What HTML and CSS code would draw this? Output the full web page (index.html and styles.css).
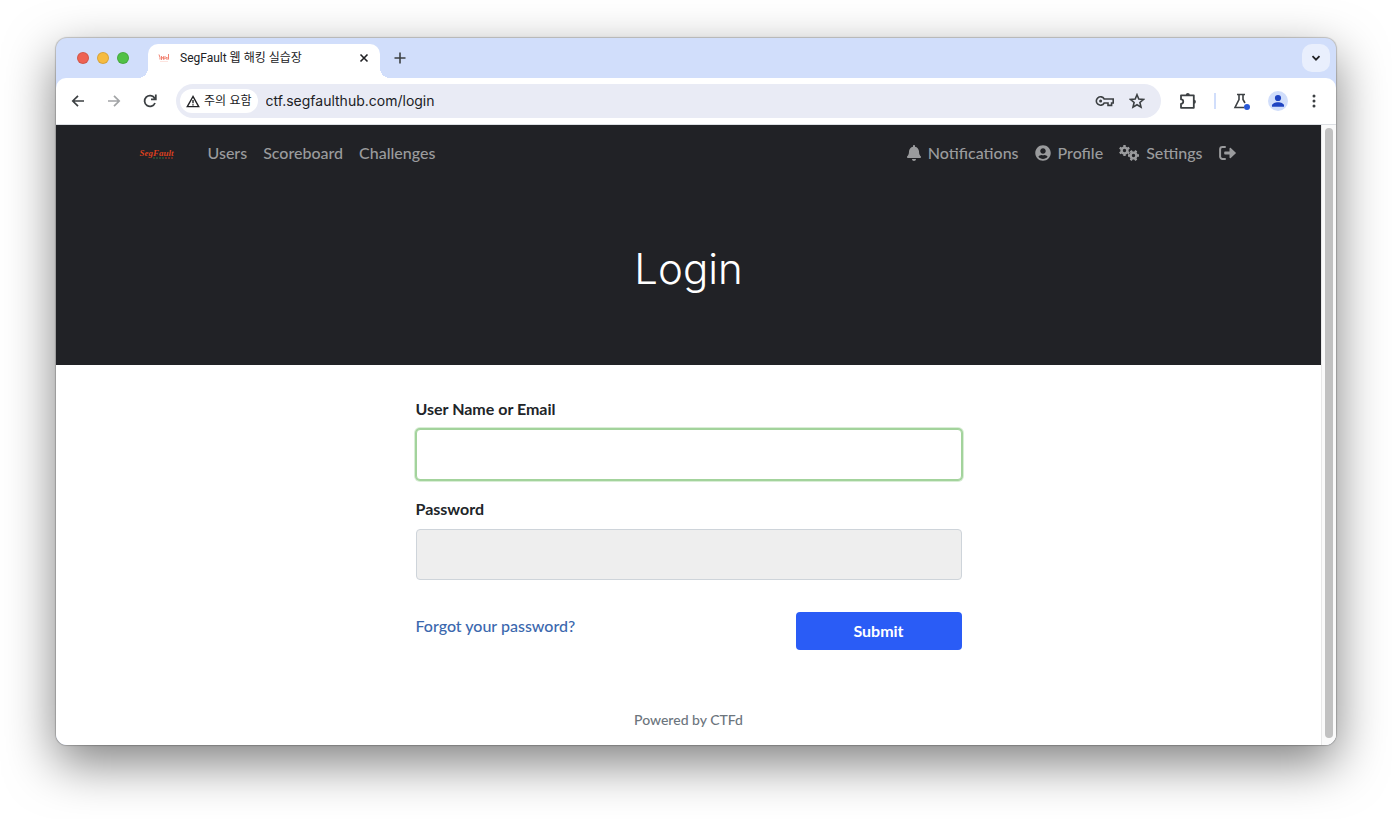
FILE: index.html
```html
<!DOCTYPE html>
<html lang="ko">

<head>
    <meta charset="UTF-8">
    <meta name="viewport" content="width=device-width, initial-scale=1.0">
    <title>SegFault 웹 해킹 실습장</title>
    <link rel="stylesheet" href="styles.css">
</head>

<body>
    <div class="window">
        <div class="tabs">
            <div class="lights">
                <span class="light red"></span>
                <span class="light yellow"></span>
                <span class="light green"></span>
            </div>
            <div class="tab">
                <svg class="favicon" width="12" height="10" viewBox="0 0 12 10" fill="none" stroke="#f28373" stroke-width="1">
                    <path d="M1 1.500l1 3v2M3.500 3v4M3.500 6l2-2.500v3l1.500-1V3M7.500 6l1.500-2v3M10.500 1v5.500" />
                    <path d="M2 8.500h8" stroke="#fde4df" />
                </svg>
                <span class="tab-title">SegFault 웹 해킹 실습장</span>
                <button class="icon-btn tab-close" aria-label="Close tab">
                    <svg width="10" height="10" viewBox="0 0 10 10" stroke="#202124" stroke-width="1.6"><path d="M1.500 1.500l7 7M8.500 1.500l-7 7" /></svg>
                </button>
            </div>
            <button class="icon-btn new-tab" aria-label="New tab">
                <svg width="12" height="12" viewBox="0 0 12 12" stroke="#3c4043" stroke-width="1.6"><path d="M6 0.500v11M0.500 6h11" /></svg>
            </button>
            <button class="icon-btn tab-search" aria-label="Search tabs">
                <svg width="10" height="8" viewBox="0 0 10 8" fill="none" stroke="#202124" stroke-width="1.8"><path d="M1.500 2.200L5 5.700l3.500-3.500" /></svg>
            </button>
        </div>

        <div class="toolbar">
            <div class="history">
                <button class="icon-btn" aria-label="Back">
                    <svg width="14" height="14" viewBox="0 0 14 14" fill="none" stroke="#3c4043" stroke-width="1.7"><path d="M13 7H2M7 1.800L1.800 7 7 12.200" /></svg>
                </button>
                <button class="icon-btn" aria-label="Forward">
                    <svg width="14" height="14" viewBox="0 0 14 14" fill="none" stroke="#a2a4a6" stroke-width="1.7"><path d="M1 7h11M7 1.800L12.200 7 7 12.200" /></svg>
                </button>
                <button class="icon-btn" aria-label="Reload">
                    <svg width="14" height="14" viewBox="0 0 14 14" fill="none" stroke="#3c4043" stroke-width="1.8"><path d="M12 9A5.400 5.400 0 1 1 11.500 4L12.500 5M12.800 0.500V5.300H8" /></svg>
                </button>
            </div>
            <div class="omnibox">
                <button class="site-info">
                    <svg width="14" height="13" viewBox="0 0 14 13" fill="none" stroke="#202124" stroke-width="1.4"><path d="M7 1.500L1.300 11.600h11.400zM7 5v3.300M7 9.200v1.400" /></svg>
                    주의 요함
                </button>
                <input class="url" type="text" aria-label="Address" value="ctf.segfaulthub.com/login">
                <button class="icon-btn" aria-label="Passwords">
                    <svg width="20" height="14" viewBox="0 0 20 14" fill="none" stroke="#3c4043" stroke-width="1.6"><path d="M9.200 5A4.200 4.200 0 1 0 9.200 9H13v2.400h3.600V9h1.600V5z" /><circle cx="5.600" cy="7" r="1.500" fill="#3c4043" stroke="none" /></svg>
                </button>
                <button class="icon-btn" aria-label="Bookmark">
                    <svg width="16" height="16" viewBox="0 0 16 16" fill="none" stroke="#3c4043" stroke-width="1.6"><path d="M8 1.700l1.800 4.300 4.700.4-3.600 3.100 1.100 4.600L8 11.700l-4 2.400 1.100-4.600L1.500 6.400l4.700-.4z" /></svg>
                </button>
            </div>
            <div class="actions">
                <button class="icon-btn" aria-label="Extensions">
                    <svg width="18" height="18" viewBox="0 0 18 18" fill="none" stroke="#3c4043" stroke-width="1.8" stroke-linejoin="round"><path d="M2 3.300h12.800v12.500H2v-4a2.200 2.200 0 0 0 0-4.500z" /><path d="M6.800 3a2 1.900 0 0 1 4 0zM15 7.700a1.900 2 0 0 1 0 4z" fill="#3c4043" stroke="none" /></svg>
                </button>
                <span class="divider"></span>
                <button class="icon-btn" aria-label="Labs">
                    <svg width="18" height="18" viewBox="0 0 18 18" fill="none" stroke="#3c4043" stroke-width="1.6"><path d="M4 2.500h8M6 2.500v5L2 15.500h9M10 2.500v5l2 3.500" /><circle cx="14" cy="15" r="3" fill="#2858d6" stroke="none" /></svg>
                </button>
                <button class="icon-btn" aria-label="Account">
                    <svg width="20" height="20" viewBox="0 0 20 20" fill="#1f44c2"><circle cx="10" cy="10" r="10" fill="#d1defb" /><circle cx="10" cy="7" r="3.100" /><path d="M4 15.800v-1.300c0-2 3-3.300 6-3.300s6 1.300 6 3.300v1.300z" /></svg>
                </button>
                <button class="icon-btn menu" aria-label="Menu">
                    <svg width="4" height="14" viewBox="0 0 4 14" fill="#3c4043"><circle cx="2" cy="2" r="1.500" /><circle cx="2" cy="7" r="1.500" /><circle cx="2" cy="12" r="1.500" /></svg>
                </button>
            </div>
        </div>

        <div class="viewport">
            <div class="page">
                <header class="header">
                    <nav class="navbar">
                        <a class="brand" href="#">
                            <span class="brand-name">SegFault</span>
                            <svg class="brand-line" width="20" height="2" viewBox="0 0 20 2" stroke-width="2"><path d="M0 1h11" stroke="#2c4632" stroke-dasharray="2 1" /><path d="M12 1h8" stroke="#6b2c25" stroke-dasharray="2 1" /></svg>
                        </a>
                        <a class="nav-link" href="#">Users</a>
                        <a class="nav-link" href="#">Scoreboard</a>
                        <a class="nav-link" href="#">Challenges</a>
                        <div class="nav-right">
                            <a class="nav-link" href="#">
                                <svg width="14" height="16" viewBox="0 0 448 512" fill="currentColor"><path d="M224 512c35.32 0 63.97-28.65 63.97-64H160.03c0 35.35 28.65 64 63.97 64zm215.39-149.71c-19.32-20.76-55.47-51.99-55.47-154.29 0-77.7-54.48-139.9-127.94-155.16V32c0-17.67-14.32-32-31.98-32s-31.98 14.33-31.98 32v20.84C118.56 68.1 64.08 130.3 64.08 208c0 102.3-36.15 133.53-55.47 154.29-6 6.45-8.66 14.16-8.61 21.71.11 16.4 12.98 32 32.1 32h383.8c19.12 0 32-15.6 32.1-32 .05-7.55-2.61-15.27-8.61-21.71z" /></svg>
                                Notifications
                            </a>
                            <a class="nav-link" href="#">
                                <svg width="16" height="16" viewBox="0 0 496 512" fill="currentColor"><path d="M248 8C111 8 0 119 0 256s111 248 248 248 248-111 248-248S385 8 248 8zm0 96c48.600 0 88 39.400 88 88s-39.400 88-88 88-88-39.400-88-88 39.400-88 88-88zm0 344c-58.700 0-111.300-26.600-146.500-68.200 18.800-35.400 55.600-59.800 98.500-59.800 2.400 0 4.800.4 7.100 1.100 13 4.200 26.600 6.900 40.900 6.900 14.300 0 28-2.700 40.900-6.900 2.300-.7 4.700-1.100 7.100-1.100 42.900 0 79.700 24.400 98.500 59.800C359.300 421.400 306.700 448 248 448z" /></svg>
                                Profile
                            </a>
                            <a class="nav-link" href="#">
                                <svg width="20" height="16" viewBox="0 0 20 16" fill="none" stroke="currentColor" stroke-width="2.4">
                                    <circle cx="5.500" cy="5.500" r="2.900" />
                                    <path d="M5.500 0v2.500M5.500 8.500V11M.7 2.800L3 4.100M8 6.900l2.300 1.300M.7 8.200L3 6.900M8 4.100l2.300-1.300" />
                                    <circle cx="14.500" cy="10.500" r="2.900" />
                                    <path d="M9 10.500h2.500M17.500 10.500H20M11.800 5.700L13.100 8M15.900 13l1.300 2.300M17.200 5.700L15.900 8M13.100 13l-1.300 2.300" />
                                </svg>
                                Settings
                            </a>
                            <a class="nav-link" href="#" aria-label="Logout">
                                <svg width="17" height="14" viewBox="0 0 17 14" fill="currentColor"><path d="M6 1.100H3.500A2.400 2.400 0 0 0 1.100 3.500v7a2.400 2.400 0 0 0 2.400 2.400H6" fill="none" stroke="currentColor" stroke-width="2" stroke-linecap="round" /><path d="M6 5.500h4.500V2.600c0-.8.800-1.100 1.300-.6l4.800 4.400a.8.800 0 0 1 0 1.200L11.800 12c-.5.500-1.300.2-1.300-.6V8.500H6a.8.800 0 0 1-.8-.8V6.300a.8.800 0 0 1 .8-.8z" /></svg>
                            </a>
                        </div>
                    </nav>
                    <h1 class="title">Login</h1>
                </header>

                <form class="login">
                    <label class="label" for="name">User Name or Email</label>
                    <input class="field focused" id="name" type="text">
                    <label class="label" for="password">Password</label>
                    <input class="field" id="password" type="password">
                    <div class="form-row">
                        <a class="forgot" href="#">Forgot your password?</a>
                        <button class="submit" type="submit">Submit</button>
                    </div>
                </form>

                <footer class="footer"><a href="#">Powered by CTFd</a></footer>
            </div>
            <div class="scrollbar"><div class="thumb"></div></div>
        </div>
    </div>
</body>

</html>
```
FILE: styles.css
```css
* {
    box-sizing: border-box;
}

body {
    margin: 0;
    min-height: 100vh;
    padding: 38px 56px 74px;
    display: flex;
    background: #fff;
    font-family: Lato, "Noto Sans CJK KR", sans-serif;
    font-size: 16px;
    line-height: 24px;
    color: #212529;
}

button,
input {
    font: inherit;
    color: inherit;
    border: 0;
    padding: 0;
    background: none;
}

a {
    text-decoration: none;
}

svg {
    display: block;
    flex: none;
}

.window {
    flex: 1;
    display: flex;
    flex-direction: column;
    border-radius: 11px;
    overflow: hidden;
    background: #d1defb;
    box-shadow: 0 0 1px 1px rgba(0, 0, 0, 0.2), 0 18px 50px rgba(0, 0, 0, 0.5);
}

.icon-btn {
    display: flex;
    align-items: center;
    justify-content: center;
    flex: none;
}

/* tab strip */
.tabs {
    display: flex;
    align-items: center;
    height: 40px;
    padding-right: 6px;
    font-family: Roboto, "Noto Sans CJK KR", sans-serif;
}

.lights {
    display: flex;
    gap: 8px;
    padding: 0 19px 0 21px;
}

.light {
    width: 12px;
    height: 12px;
    border-radius: 50%;
    border: 1px solid rgba(0, 0, 0, 0.12);
}

.red {
    background: #ee6253;
}

.yellow {
    background: #f6bb40;
}

.green {
    background: #50c146;
}

.tab {
    position: relative;
    align-self: flex-end;
    display: flex;
    align-items: center;
    width: 232px;
    height: 34px;
    padding: 0 11px 6px 10px;
    border-radius: 10px 10px 0 0;
    background: #fff;
}

.tab::before,
.tab::after {
    content: "";
    position: absolute;
    bottom: 0;
    width: 10px;
    height: 10px;
}

.tab::before {
    right: 100%;
    background: radial-gradient(circle at 0 0, transparent 10px, #fff 10px);
}

.tab::after {
    left: 100%;
    background: radial-gradient(circle at 100% 0, transparent 10px, #fff 10px);
}

.tab-title {
    flex: 1;
    margin-left: 10px;
    font-size: 12px;
    line-height: 16px;
    color: #202124;
}

.new-tab {
    margin-left: 14px;
}

.tab-search {
    width: 28px;
    height: 28px;
    margin-left: auto;
    border-radius: 10px;
    background: #e9effd;
}

/* toolbar */
.toolbar {
    display: flex;
    align-items: center;
    height: 47px;
    padding: 0 20px 0 15px;
    border-radius: 10px 10px 0 0;
    border-bottom: 1px solid #dcdfe3;
    background: #fff;
    font-family: Inter, "Noto Sans CJK KR", sans-serif;
}

.history {
    display: flex;
    gap: 22px;
    margin-right: 19px;
}

.omnibox {
    flex: 1;
    display: flex;
    align-items: center;
    gap: 14px;
    height: 34px;
    padding: 0 16px 0 4px;
    border-radius: 17px;
    background: #e9ebf5;
}

.site-info {
    display: flex;
    align-items: center;
    gap: 4px;
    height: 24px;
    padding: 0 6px;
    border-radius: 12px;
    background: #fff;
    font-size: 12px;
    color: #202124;
}

.url {
    flex: 1;
    min-width: 0;
    margin-left: -6px;
    font-size: 14px;
    color: #202124;
}

.actions {
    display: flex;
    align-items: center;
    gap: 17px;
    margin-left: 18px;
}

.divider {
    width: 2px;
    height: 16px;
    background: #d1defb;
}

.menu {
    margin-left: 7px;
}

/* page */
.viewport {
    flex: 1;
    display: flex;
    background: #fff;
}

.page {
    flex: 1;
    display: flex;
    flex-direction: column;
}

.header {
    height: 240px;
    background: #212226;
}

.navbar {
    display: flex;
    align-items: center;
    max-width: 1110px;
    height: 56px;
    margin: 0 auto;
}

.brand {
    width: 66px;
    padding: 2px 0 0 6px;
    color: #d8401f;
}

.brand-name {
    display: block;
    font-family: "Liberation Serif", serif;
    font-size: 9px;
    font-style: italic;
    font-weight: bold;
    line-height: 8px;
}

.brand-line {
    margin-left: 13px;
}

.nav-link {
    display: flex;
    align-items: center;
    gap: 7px;
    padding: 8px;
    font-weight: 500;
    color: #9a9b9d;
}

.nav-right {
    display: flex;
    margin-left: auto;
}

.title {
    margin: 64px 0 0;
    font-family: Inter, sans-serif;
    font-size: 42px;
    font-weight: 300;
    line-height: 48px;
    text-align: center;
    color: #fff;
}

.login {
    width: 100%;
    max-width: 546px;
    margin: 0 auto;
    padding-top: 32px;
}

.label {
    display: block;
    margin-bottom: 8px;
    font-weight: bold;
}

.field {
    display: block;
    width: 100%;
    height: 51px;
    margin-bottom: 17px;
    padding: 0 12px;
    border: 1px solid #ced4da;
    border-radius: 4px;
    background: #eee;
}

.focused {
    border-color: #a3d39c;
    background: #fff;
    box-shadow: 0 0 0 1px #a3d39c, 0 0 0 2px #d9eed6;
    outline: none;
}

.form-row {
    display: flex;
    align-items: flex-start;
    justify-content: space-between;
    padding-top: 15px;
}

.forgot {
    line-height: 28px;
    font-weight: 500;
    color: #3b68ae;
}

.submit {
    width: 166px;
    height: 38px;
    border-radius: 4px;
    background: #2a5cf6;
    font-weight: bold;
    color: #fff;
}

.footer {
    margin-top: auto;
    padding-bottom: 13px;
    font-size: 14px;
    font-weight: 500;
    text-align: center;
}

.footer a {
    color: #6c757d;
}

.scrollbar {
    width: 15px;
    padding: 3px 3px 7px;
    display: flex;
    border-left: 1px solid #e8e8e8;
    background: #fafafa;
}

.thumb {
    flex: 1;
    border-radius: 4px;
    background: #c1c1c1;
}
```
